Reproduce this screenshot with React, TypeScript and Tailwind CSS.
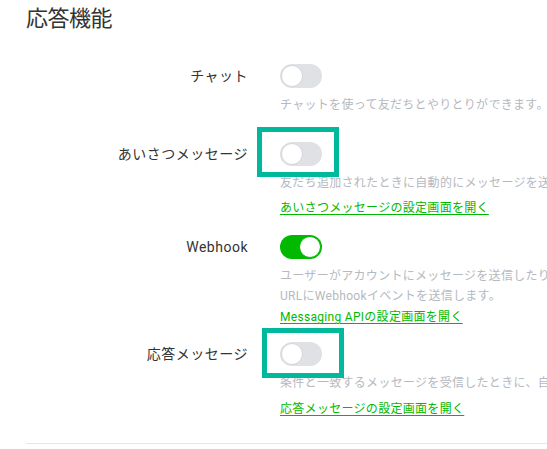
import React from 'react';

interface FeatureRow {
  label: string;
  on: boolean;
  highlight?: 'a' | 'b';
  desc: string[];
  link?: string;
  topGap: string;
  linkGap?: string;
}

const ROWS: FeatureRow[] = [
  {
    label: 'チャット',
    on: false,
    desc: ['チャットを使って友だちとやりとりができます。'],
    topGap: 'mt-[29px]',
  },
  {
    label: 'あいさつメッセージ',
    on: false,
    highlight: 'a',
    desc: ['友だち追加されたときに自動的にメッセージを送信します。'],
    link: 'あいさつメッセージの設定画面を開く',
    topGap: 'mt-[27px]',
    linkGap: 'mt-[5px]',
  },
  {
    label: 'Webhook',
    on: true,
    desc: [
      'ユーザーがアカウントにメッセージを送信したり、友だち追加したりしたときに、',
      'URLにWebhookイベントを送信します。',
    ],
    link: 'Messaging APIの設定画面を開く',
    topGap: 'mt-[17px]',
    linkGap: 'mt-[1px]',
  },
  {
    label: '応答メッセージ',
    on: false,
    highlight: 'b',
    desc: ['条件と一致するメッセージを受信したときに、自動的にメッセージを送信します。'],
    link: '応答メッセージの設定画面を開く',
    topGap: 'mt-[15px]',
    linkGap: 'mt-[6px]',
  },
];

const Toggle: React.FC<{ on: boolean }> = ({ on }) => (
  <div
    className={`relative w-[42px] h-[24px] rounded-full flex items-center px-[1px] ${
      on ? 'bg-[#00b900] justify-end' : 'bg-[#dfe1e5] justify-start'
    }`}
  >
    <div
      className={`w-[22px] h-[22px] rounded-full bg-white border ${
        on ? 'border-[#00b900]' : 'border-[#d3d6db]'
      }`}
    />
  </div>
);

export default function App() {
  return (
    <div
      className="w-[547px] h-[449px] overflow-hidden bg-white text-[#333]"
      style={{ fontFamily: '"Roboto", "Noto Sans CJK JP", sans-serif' }}
    >
      <h1 className="pl-[26px] pt-[3px] text-[22px] leading-[32px] font-normal tracking-[-0.5px]">
        応答機能
      </h1>

      {ROWS.map((row) => (
        <div key={row.label} className={row.topGap}>
          <div className="flex items-center">
            <div className="w-[248px] shrink-0 pr-0 text-right text-[14px] leading-[24px] tracking-[0.5px]">
              {row.label}
            </div>
            <div className="relative ml-[32px]">
              <Toggle on={row.on} />
              {row.highlight === 'a' && (
                <div className="absolute left-[-23px] top-[-15px] w-[82px] h-[50px] border-[5px] border-[#00b99c]" />
              )}
              {row.highlight === 'b' && (
                <div className="absolute left-[-18px] top-[-14px] w-[82px] h-[50px] border-[5px] border-[#00b99c]" />
              )}
            </div>
          </div>
          <div className="ml-[280px] mt-[7px] whitespace-nowrap">
            {row.desc.map((line) => (
              <div key={line} className="text-[12px] leading-[20px] text-[#b5b9c0] tracking-[0.3px]">
                {line}
              </div>
            ))}
            {row.link && (
              <div className={`${row.linkGap} text-[12px] leading-[20px]`}>
                <a className="text-[#00b900] underline underline-offset-2 tracking-[0.3px]">{row.link}</a>
              </div>
            )}
          </div>
        </div>
      ))}

      <div className="ml-[26px] mt-[24px] border-t border-[#e6e6e6]" />
    </div>
  );
}
